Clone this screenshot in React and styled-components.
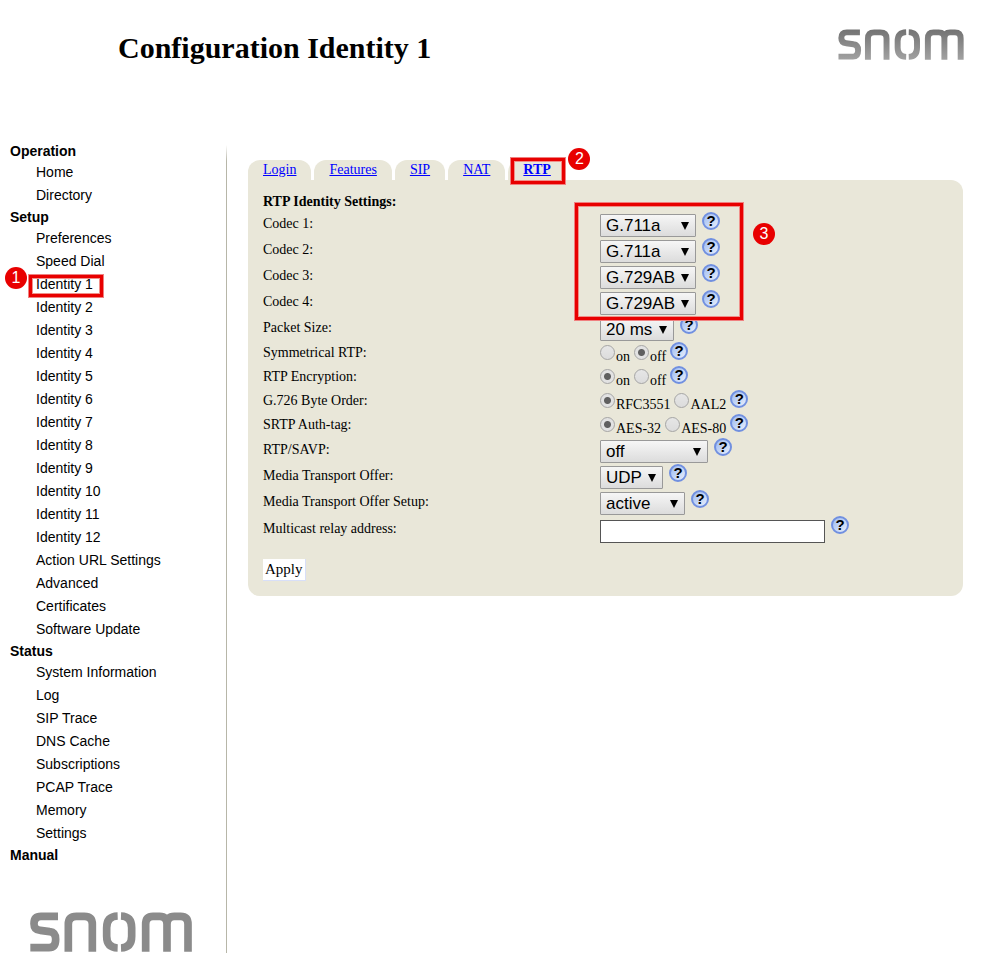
import { useId } from "react";
import styled, { createGlobalStyle } from "styled-components";

const menu = [
  { title: "Operation", items: ["Home", "Directory"] },
  {
    title: "Setup",
    items: [
      "Preferences",
      "Speed Dial",
      "Identity 1",
      "Identity 2",
      "Identity 3",
      "Identity 4",
      "Identity 5",
      "Identity 6",
      "Identity 7",
      "Identity 8",
      "Identity 9",
      "Identity 10",
      "Identity 11",
      "Identity 12",
      "Action URL Settings",
      "Advanced",
      "Certificates",
      "Software Update",
    ],
  },
  {
    title: "Status",
    items: [
      "System Information",
      "Log",
      "SIP Trace",
      "DNS Cache",
      "Subscriptions",
      "PCAP Trace",
      "Memory",
      "Settings",
    ],
  },
  { title: "Manual", items: [] },
];

const tabs = ["Login", "Features", "SIP", "NAT", "RTP"];

const codecs = [
  { label: "Codec 1:", value: "G.711a" },
  { label: "Codec 2:", value: "G.711a" },
  { label: "Codec 3:", value: "G.729AB" },
  { label: "Codec 4:", value: "G.729AB" },
];

const radios = [
  { label: "Symmetrical RTP:", options: ["on", "off"], value: "off" },
  { label: "RTP Encryption:", options: ["on", "off"], value: "on" },
  { label: "G.726 Byte Order:", options: ["RFC3551", "AAL2"], value: "RFC3551" },
  { label: "SRTP Auth-tag:", options: ["AES-32", "AES-80"], value: "AES-32" },
];

const Logo = ({ width, height, from, to }) => {
  const id = useId();

  return (
    <svg
      width={width}
      height={height}
      viewBox="91 67 486 120"
      fill="none"
      stroke={`url(#${id})`}
      strokeWidth="23"
      role="img"
      aria-label="snom"
    >
      <defs>
        <linearGradient
          id={id}
          gradientUnits="userSpaceOnUse"
          x1="0"
          y1="67"
          x2="0"
          y2="187"
        >
          <stop offset="0" stopColor={from} />
          <stop offset="1" stopColor={to} />
        </linearGradient>
      </defs>
      <path d="M175 80H124Q103 80 103 102Q103 121 122 122L150 126Q168 128 168 149Q168 174 148 174H92" />
      <path d="M206 186V104Q206 80 230 80H254Q278 80 278 104V186" />
      <path d="M354 79Q321 80 321 114V140Q321 174 354 175" />
      <path d="M364 79Q396 80 396 114V140Q396 174 364 175" />
      <path d="M438 186V104Q438 80 460 80H480Q502 80 502 104V186M502 104Q502 80 524 80H543Q565 80 565 104V186" />
    </svg>
  );
};

const Help = () => (
  <HelpButton type="button" aria-label="Help">
    ?
  </HelpButton>
);

const SelectRow = ({ label, value, width }) => {
  const id = useId();

  return (
    <Row>
      <Label htmlFor={id}>{label}</Label>
      <SelectBox $width={width}>
        <Select id={id} defaultValue={value}>
          <option>{value}</option>
        </Select>
        <svg width="8" height="8" viewBox="0 0 8 8">
          <path d="M0 0H8L4 8Z" fill="#000" />
        </svg>
      </SelectBox>
      <Help />
    </Row>
  );
};

const RadioRow = ({ label, options, value }) => {
  const name = useId();

  return (
    <Row $height={24} role="radiogroup" aria-labelledby={name}>
      <Label as="span" id={name} $line={22}>
        {label}
      </Label>
      <Options>
        {options.map((option) => (
          <Option key={option}>
            <Radio name={name} defaultChecked={option === value} />
            <span>{option}</span>
          </Option>
        ))}
      </Options>
      <Help />
    </Row>
  );
};

export default function App() {
  return (
    <>
      <GlobalStyle />
      <Header>
        <h1>Configuration Identity 1</h1>
        <Logo width={126} height={31} from="#727272" to="#a2a2a2" />
      </Header>
      <Body>
        <Sidebar>
          {menu.map((group) => (
            <section key={group.title}>
              <GroupTitle>{group.title}</GroupTitle>
              <MenuList>
                {group.items.map((item) => (
                  <li key={item}>
                    <a href="#">{item}</a>
                    {item === "Identity 1" && (
                      <MenuMark>
                        <Badge>1</Badge>
                      </MenuMark>
                    )}
                  </li>
                ))}
              </MenuList>
            </section>
          ))}
          <SideLogo>
            <Logo width={162} height={40} from="#8b8b8b" to="#8b8b8b" />
          </SideLogo>
        </Sidebar>
        <Divider />
        <Main>
          <TabList>
            {tabs.map((tab) => (
              <Tab key={tab} $selected={tab === "RTP"}>
                <a href="#">{tab}</a>
                {tab === "RTP" && (
                  <TabMark>
                    <Badge>2</Badge>
                  </TabMark>
                )}
              </Tab>
            ))}
          </TabList>
          <Panel onSubmit={(e) => e.preventDefault()}>
            <h2>RTP Identity Settings:</h2>
            <CodecGroup>
              {codecs.map((codec) => (
                <SelectRow key={codec.label} width={96} {...codec} />
              ))}
              <CodecMark>
                <Badge>3</Badge>
              </CodecMark>
            </CodecGroup>
            <SelectRow label="Packet Size:" value="20 ms" width={74} />
            {radios.map((radio) => (
              <RadioRow key={radio.label} {...radio} />
            ))}
            <SelectRow label="RTP/SAVP:" value="off" width={108} />
            <SelectRow label="Media Transport Offer:" value="UDP" width={63} />
            <SelectRow
              label="Media Transport Offer Setup:"
              value="active"
              width={85}
            />
            <Row $height={27}>
              <Label htmlFor="relay" $line={26}>
                Multicast relay address:
              </Label>
              <TextInput id="relay" type="text" />
              <Help />
            </Row>
            <Apply type="submit">Apply</Apply>
          </Panel>
        </Main>
      </Body>
    </>
  );
}

const GlobalStyle = createGlobalStyle`
  * {
    box-sizing: border-box;
  }

  body {
    margin: 0;
    background-color: #fff;
    color: #000;
    font-family: "Liberation Serif", serif;
    font-size: 14px;
  }

  h1, h2, ul {
    margin: 0;
    padding: 0;
  }

  ul {
    list-style: none;
  }

  svg {
    display: block;
  }
`;

const Header = styled.header`
  display: flex;
  justify-content: space-between;
  align-items: flex-start;
  padding: 29px 24px 0 118px;
  height: 141px;

  h1 {
    font-size: 30px;
    line-height: 38px;
  }
`;

const Body = styled.div`
  display: flex;
  min-height: calc(100vh - 141px);
`;

const Sidebar = styled.nav`
  flex: 0 0 226px;
  font-family: "Liberation Sans", sans-serif;
`;

const GroupTitle = styled.div`
  padding-left: 10px;
  font-weight: bold;
  line-height: 20px;
`;

const MenuList = styled.ul`
  li {
    position: relative;
    padding-left: 36px;
    line-height: 23px;
  }

  a {
    color: #000;
    text-decoration: none;
  }
`;

const SideLogo = styled.div`
  padding: 47px 0 0 30px;
`;

const Divider = styled.div`
  width: 1px;
  margin-top: 4px;
  background: linear-gradient(#fff, #b7b6a8 16px);
`;

const Main = styled.main`
  flex: 1;
  padding: 19px 25px 0 21px;
`;

const TabList = styled.ul`
  display: flex;
  gap: 3px;
`;

const Tab = styled.li`
  position: relative;
  height: 20px;
  padding: 0 15px;
  border-radius: 12px 12px 0 0;
  background-color: #e9e7d9;
  font-weight: ${(props) => (props.$selected ? "bold" : "normal")};
  line-height: 19px;

  a {
    color: #00f;
  }
`;

const Panel = styled.form`
  padding: 11px 15px 15px;
  border-radius: 0 12px 12px 12px;
  background-color: #e9e7d9;

  h2 {
    padding-top: 1px;
    font-size: 14px;
    line-height: 20px;
  }
`;

const CodecGroup = styled.div`
  position: relative;
`;

const Row = styled.div`
  display: flex;
  align-items: flex-start;
  height: ${(props) => props.$height || 26}px;
`;

const Label = styled.label`
  flex: 0 0 337px;
  line-height: ${(props) => props.$line || 24}px;
`;

const SelectBox = styled.div`
  position: relative;
  width: ${(props) => props.$width}px;
  margin-top: 2px;

  svg {
    position: absolute;
    top: 8px;
    right: 7px;
    pointer-events: none;
  }
`;

const Select = styled.select`
  appearance: none;
  display: block;
  width: 100%;
  height: 23px;
  padding: 0 0 0 5px;
  border: 1px solid #999;
  border-radius: 1px;
  background: linear-gradient(#f6f6f6, #dcdcdc);
  color: #000;
  font-family: "Liberation Sans", sans-serif;
  font-size: 17px;
  line-height: 21px;
`;

const Options = styled.div`
  display: flex;
  gap: 4px;
  padding-top: 3px;
`;

const Option = styled.label`
  display: flex;
  align-items: flex-start;
  gap: 1px;

  span {
    line-height: 23px;
  }
`;

const Radio = styled.input.attrs({ type: "radio" })`
  appearance: none;
  width: 15px;
  height: 15px;
  margin: 0;
  border: 1px solid #a5a5a5;
  border-radius: 50%;
  background: linear-gradient(#e6e6e6, #dcdcdc);

  &:checked {
    background: radial-gradient(circle, #606060 3px, #e2e2e2 4px);
  }
`;

const TextInput = styled.input`
  width: 225px;
  height: 23px;
  margin-top: 4px;
  border: 1px solid #555;
  background-color: #fff;
`;

const HelpButton = styled.button`
  width: 18px;
  height: 18px;
  margin-left: 6px;
  padding: 0;
  border: 2px solid #7190e0;
  border-radius: 50%;
  background: linear-gradient(135deg, #9dbbf0, #e9effb);
  color: #000;
  font-family: "Liberation Sans", sans-serif;
  font-size: 15px;
  font-weight: bold;
  line-height: 14px;
  cursor: pointer;

  ${Options} + & {
    margin-left: 4px;
  }
`;

const Apply = styled.button`
  display: block;
  height: 22px;
  margin-top: 16px;
  padding: 0 2px;
  border: solid #d8dff8;
  border-width: 0 1px 1px 0;
  background-color: #fff;
  color: #000;
  font-family: "Liberation Serif", serif;
  font-size: 15px;
  line-height: 21px;
`;

const Badge = styled.span`
  position: absolute;
  width: 22px;
  height: 22px;
  border-radius: 50%;
  background-color: #e80000;
  color: #fff;
  font-family: "Liberation Sans", sans-serif;
  font-size: 16px;
  font-weight: normal;
  line-height: 22px;
  text-align: center;
`;

const Mark = styled.div`
  position: absolute;
  z-index: 1;
  border: 4px solid #e80000;
  outline: 1px solid #f08080;
  outline-offset: -1px;
  box-shadow: inset 0 0 0 1px #f0908a;
  pointer-events: none;
`;

const MenuMark = styled(Mark)`
  top: 1px;
  left: 28px;
  width: 76px;
  height: 24px;

  ${Badge} {
    top: -11px;
    left: -27px;
  }
`;

const TabMark = styled(Mark)`
  top: -3px;
  left: 2px;
  width: 56px;
  height: 28px;

  ${Badge} {
    top: -13px;
    left: 54px;
  }
`;

const CodecMark = styled(Mark)`
  top: -10px;
  bottom: -5px;
  left: 311px;
  width: 170px;

  ${Badge} {
    top: 17px;
    left: 175px;
  }
`;
